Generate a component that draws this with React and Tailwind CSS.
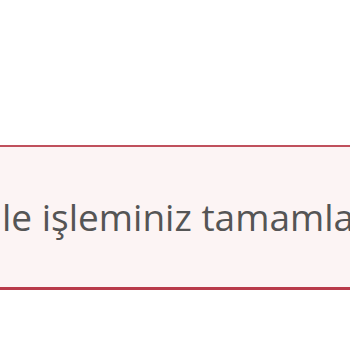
export default function App() {
  return (
    <div className="w-[350px] h-[350px] bg-white overflow-hidden pt-[145px]">
      <div className="-ml-[20px] w-[420px] h-[145px] bg-[#fcf4f4] border-t-2 border-b-[3px] border-t-[#c0505c] border-b-[#b83a4a] flex items-center">
        <p
          className="pl-[22px] whitespace-nowrap text-[37px] leading-[37px] text-[#555555] pb-[2px]"
          style={{ fontFamily: '"Open Sans", sans-serif' }}
        >
          le işleminiz tamamlanamadı
        </p>
      </div>
    </div>
  );
}
